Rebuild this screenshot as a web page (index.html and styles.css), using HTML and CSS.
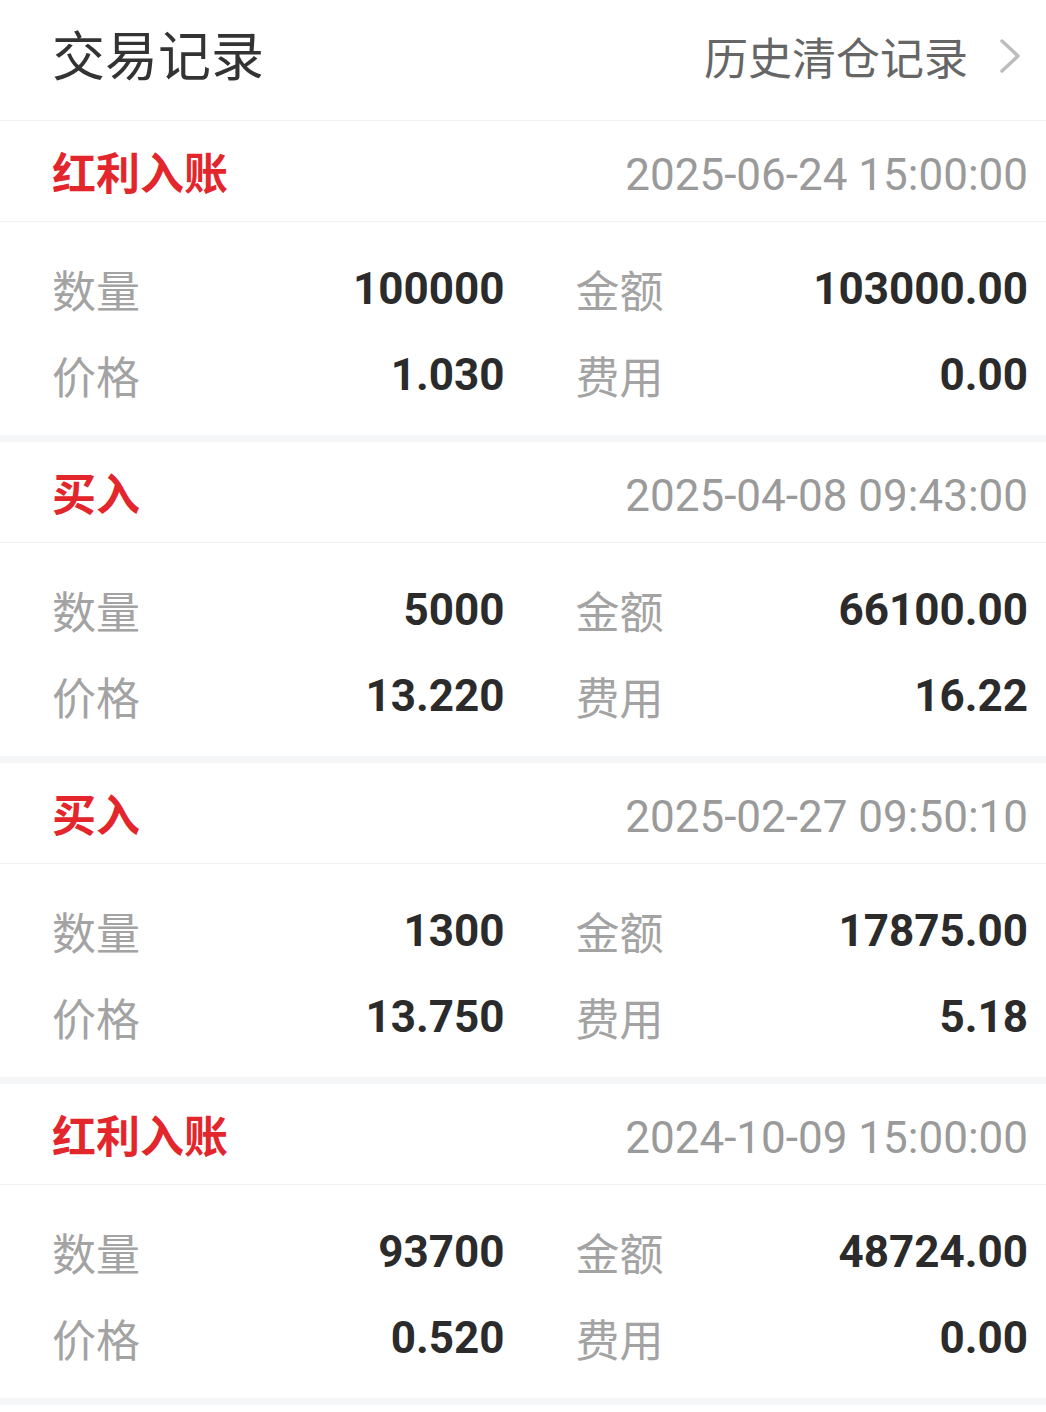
FILE: index.html
```html
<!DOCTYPE html>
<html>
<head>
	<title>交易记录</title>
	<meta charset="utf-8" />
	<link rel="stylesheet" href="styles.css">
</head>
<body>
	<div class="top">
		<div class="top-title">交易记录</div>
		<div class="top-link">历史清仓记录
			<svg class="chevron" viewBox="0 0 24 36" width="24" height="36">
				<polyline points="4,3 20,18 4,33" />
			</svg>
		</div>
	</div>

	<div class="card">
		<div class="card-head">
			<span class="kind">红利入账</span>
			<span class="time">2025-06-24 15:00:00</span>
		</div>
		<div class="card-body">
			<div class="pair"><span class="label">数量</span><span class="value">100000</span></div>
			<div class="pair"><span class="label">金额</span><span class="value">103000.00</span></div>
			<div class="pair"><span class="label">价格</span><span class="value">1.030</span></div>
			<div class="pair"><span class="label">费用</span><span class="value">0.00</span></div>
		</div>
	</div>

	<div class="card">
		<div class="card-head">
			<span class="kind">买入</span>
			<span class="time">2025-04-08 09:43:00</span>
		</div>
		<div class="card-body">
			<div class="pair"><span class="label">数量</span><span class="value">5000</span></div>
			<div class="pair"><span class="label">金额</span><span class="value">66100.00</span></div>
			<div class="pair"><span class="label">价格</span><span class="value">13.220</span></div>
			<div class="pair"><span class="label">费用</span><span class="value">16.22</span></div>
		</div>
	</div>

	<div class="card">
		<div class="card-head">
			<span class="kind">买入</span>
			<span class="time">2025-02-27 09:50:10</span>
		</div>
		<div class="card-body">
			<div class="pair"><span class="label">数量</span><span class="value">1300</span></div>
			<div class="pair"><span class="label">金额</span><span class="value">17875.00</span></div>
			<div class="pair"><span class="label">价格</span><span class="value">13.750</span></div>
			<div class="pair"><span class="label">费用</span><span class="value">5.18</span></div>
		</div>
	</div>

	<div class="card">
		<div class="card-head">
			<span class="kind">红利入账</span>
			<span class="time">2024-10-09 15:00:00</span>
		</div>
		<div class="card-body">
			<div class="pair"><span class="label">数量</span><span class="value">93700</span></div>
			<div class="pair"><span class="label">金额</span><span class="value">48724.00</span></div>
			<div class="pair"><span class="label">价格</span><span class="value">0.520</span></div>
			<div class="pair"><span class="label">费用</span><span class="value">0.00</span></div>
		</div>
	</div>
</body>
</html>
```

FILE: styles.css
```css
body {
	margin: 0;
	background: #fff;
	font-family: Roboto, "Noto Sans CJK SC", sans-serif;
}
.top {								/* 顶部标题栏 */
	height: 106px;
	display: flex;
	align-items: center;
	justify-content: space-between;
	padding: 0 24px 14px 52px;
	border-bottom: 1px solid #f0f0f0;
}
.top-title { font-size: 53px; color: #333; }
.top-link {
	font-size: 44px; color: #666;
	display: flex; align-items: center; gap: 30px;
	padding-top: 6px;
}
.chevron { fill: none; stroke: #bdbdbd; stroke-width: 3.5; stroke-linecap: round; stroke-linejoin: round; }
.card { border-bottom: 7px solid #f5f6f8; }
.card-head {
	height: 100px;
	display: flex;
	align-items: center;
	justify-content: space-between;
	padding: 0 18px 0 52px;
	border-bottom: 1px solid #f2f2f2;
}
.kind { font-size: 44px; font-weight: bold; color: #e3262b; }
.time { font-size: 44px; color: #9a9a9a; padding-top: 8px; }
.card-body {						/* 两列数据 */
	display: grid;
	grid-template-columns: 1fr 1fr;
	grid-auto-rows: 86px;
	column-gap: 71px;
	padding: 24px 18px 17px 52px;
}
.pair { display: flex; align-items: center; justify-content: space-between; }
.label { font-size: 44px; color: #a3a3a3; }
.value { font-size: 44px; font-weight: bold; color: #2b2b2b; }
```
